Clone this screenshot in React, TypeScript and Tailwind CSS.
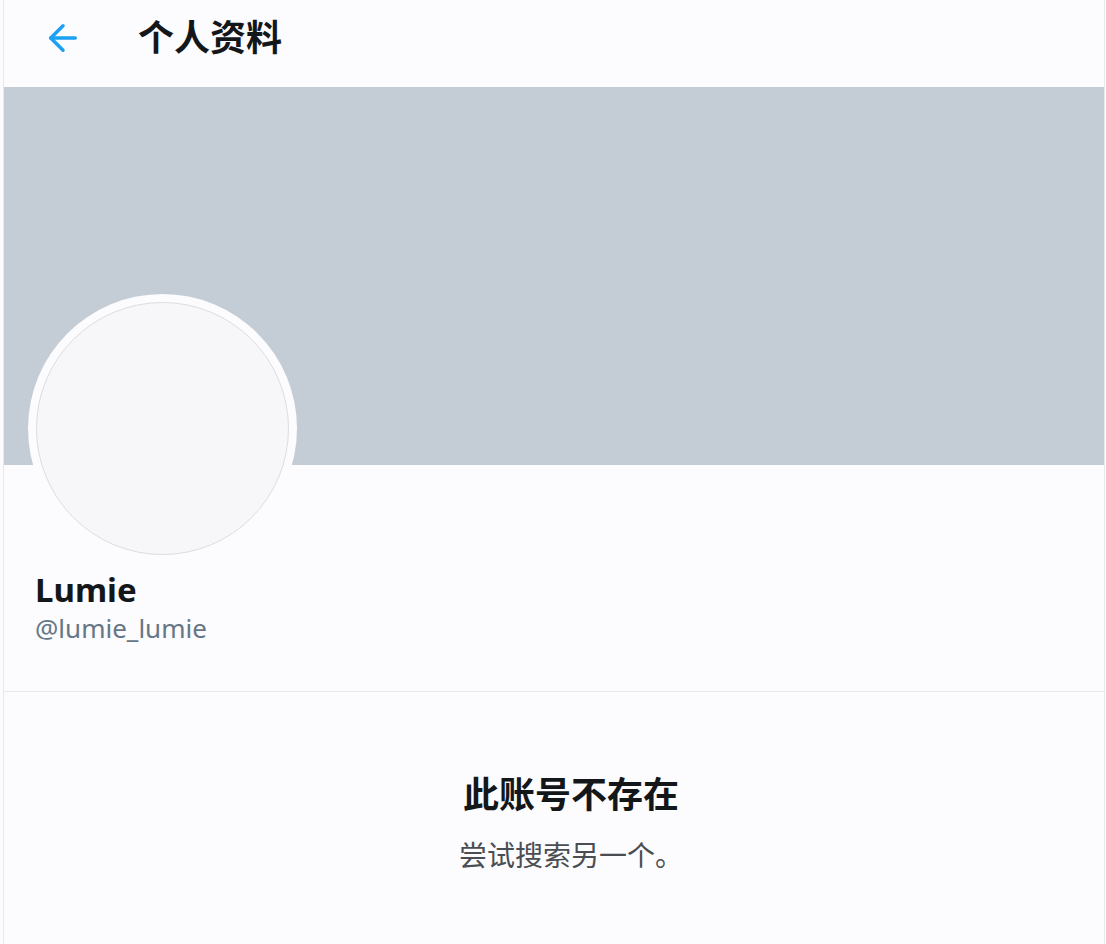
import { ArrowLeft } from 'lucide-react';

export default function App() {
  return (
    <div
      className="h-[944px] w-[1106px] overflow-hidden bg-[#fcfbfd]"
      style={{ fontFamily: '"Noto Sans", "Noto Sans CJK SC", sans-serif' }}
    >
      <div className="ml-[3px] h-full w-[1102px] border-x border-[#e6e8eb]">
        <div className="flex h-[87px] items-center pb-[12px]">
          <ArrowLeft className="ml-[38px] h-[42px] w-[42px] text-[#1da1f2]" strokeWidth={2} />
          <h1 className="ml-[54px] text-[36px] font-bold leading-none text-[#14171a]">个人资料</h1>
        </div>

        <div className="h-[378px] bg-[#c4cdd5]" />

        <div className="-mt-[171px] ml-[24px] flex h-[269px] w-[269px] items-center justify-center rounded-full bg-[#fcfbfd]">
          <div className="h-[253px] w-[253px] rounded-full border border-[#dcdde0] bg-[#f7f7f9]" />
        </div>

        <div className="px-[31px] pb-[46px] pt-[6px]">
          <div className="text-[33px] font-bold leading-[42px] text-[#14171a]">Lumie</div>
          <div className="text-[26px] leading-[34px] text-[#657786]">@lumie_lumie</div>
        </div>

        <div className="border-t border-[#e6e8eb]" />

        <div className="flex flex-col items-center pl-[34px] pt-[80px]">
          <div className="text-[36px] font-bold leading-[46px] text-[#14171a]">此账号不存在</div>
          <div className="mt-[19px] text-[28px] leading-[36px] text-[#4a4e52]">尝试搜索另一个。</div>
        </div>
      </div>
    </div>
  );
}
